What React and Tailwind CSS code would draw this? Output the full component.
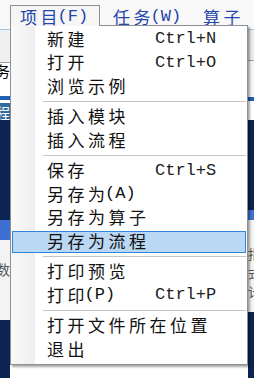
import React from "react";

const CJK_RE = /[\u3000-\u9fff\uff00-\uffef]+|[^\u3000-\u9fff\uff00-\uffef]+/g;
const isCJK = (s) => /[\u3000-\u9fff\uff00-\uffef]/.test(s);

function Label({ text }) {
  const runs = text.match(CJK_RE) || [];
  return (
    <span className="whitespace-nowrap inline-flex items-center">
      {runs.map((r, i) => {
        if (!isCJK(r)) {
          return (
            <span key={i} className="font-['Liberation_Mono',monospace]">
              {r}
            </span>
          );
        }
        const chars = Array.from(r);
        const followed = i < runs.length - 1;
        return chars.map((c, j) => (
          <span
            key={i + "-" + j}
            className={
              "inline-block font-['Noto_Sans_CJK_SC',sans-serif] " +
              (followed && j === chars.length - 1 ? "w-[17px]" : "w-[20.5px]")
            }
          >
            {c}
          </span>
        ));
      })}
    </span>
  );
}

const items = [
  { l: "新建", s: "Ctrl+N" },
  { l: "打开", s: "Ctrl+O" },
  { l: "浏览示例" },
  "sep",
  { l: "插入模块" },
  { l: "插入流程" },
  "sep",
  { l: "保存", s: "Ctrl+S" },
  { l: "另存为(A)" },
  { l: "另存为算子" },
  { l: "另存为流程", hl: true },
  "sep",
  { l: "打印预览" },
  { l: "打印(P)", s: "Ctrl+P" },
  "sep",
  { l: "打开文件所在位置" },
  { l: "退出" },
];

function Dropdown() {
  return (
    <div className="absolute left-[10px] top-[25px] w-[238px] h-[340px] border border-[#8f8f8f] bg-[linear-gradient(to_right,#f9f9f9_0px,#eeeeee_24px,#ffffff_24px)] shadow-[2px_2px_2px_rgba(0,0,0,0.35)] pt-px">
      {items.map((it, i) =>
        it === "sep" ? (
          <div key={i} className="h-[7px] flex items-center pl-[32px] pr-[1px]">
            <div className="h-px w-full bg-[#c4c4c4]" />
          </div>
        ) : (
          <div
            key={i}
            className="relative h-[23.5px] grid grid-cols-[108px_1fr] items-center pl-[36px] text-[17px] leading-none text-[#111]"
          >
            {it.hl && (
              <div className="absolute left-px right-px top-[2px] bottom-0 border border-[#2f86d8] bg-[#bad8f3]" />
            )}
            <span className="relative">
              <Label text={it.l} />
            </span>
            <span className="relative font-['Liberation_Mono',monospace] text-[#222]">
              {it.s || ""}
            </span>
          </div>
        )
      )}
    </div>
  );
}

function Menubar() {
  return (
    <div className="h-[29px] bg-[#f8f8f8] flex items-start text-[17px] leading-none text-[#2445ad] border-b border-[#9cc4e4] box-content">
      <div className="relative z-10 ml-[10px] mt-[5px] h-[21px] w-[90px] border border-b-0 border-[#8f8f8f] bg-[#f6f6f6] flex items-start pt-[2px] pl-[9px]">
        <Label text="项目(F)" />
      </div>
      <div className="mt-[5px] h-[20px] w-[90px] flex items-start pt-[3px] pl-[13px]">
        <Label text="任务(W)" />
      </div>
      <div className="mt-[5px] h-[20px] flex items-start pt-[3px] pl-[13px]">
        <Label text="算子" />
      </div>
    </div>
  );
}

export default function App() {
  return (
    <div className="relative w-[254px] h-[378px] overflow-hidden bg-white">
      <Menubar />
      <div className="grid grid-cols-[10px_238px_6px] h-[348px]">
        {/* left strip */}
        <div className="flex flex-col overflow-hidden">
          <div className="h-[32px] bg-[#f0f0f0]" />
          <div className="h-px bg-[#a0a0a0]" />
          <div className="h-[33px] bg-white flex justify-end items-start overflow-hidden">
            <span className="font-['Noto_Sans_CJK_SC',sans-serif] text-[15px] leading-[15px] text-black whitespace-nowrap">任务</span>
          </div>
          <div className="h-[4px] bg-[#1f5fb4]" />
          <div className="h-[3px] bg-white" />
          <div className="h-[17px] bg-[#2e6b9e] flex justify-end items-center overflow-hidden">
            <span className="font-['Noto_Sans_CJK_SC',sans-serif] text-[14px] leading-none text-white whitespace-nowrap">流程</span>
          </div>
          <div className="h-[100px] bg-[#0b2452]" />
          <div className="h-[20px] bg-[#3d6fd2]" />
          <div className="h-[80px] bg-[#f3f3f3] flex justify-end items-start pt-[22px] overflow-hidden">
            <span className="font-['Noto_Sans_CJK_SC',sans-serif] text-[14px] leading-none text-[#555] whitespace-nowrap">参数</span>
          </div>
          <div className="flex-1 bg-[#0b2452]" />
        </div>
        {/* middle, covered */}
        <div className="bg-white" />
        {/* right strip */}
        <div className="flex flex-col overflow-hidden">
          <div className="h-[30px] bg-[#ebebeb]" />
          <div className="h-px bg-[#a0a0a0]" />
          <div className="h-[36px] bg-[#f4f4f4]" />
          <div className="h-[4px] bg-[#1f5fb4]" />
          <div className="h-[19px] bg-white" />
          <div className="h-[90px] bg-[#0b2452]" />
          <div className="h-[10px] bg-[#4070d0]" />
          <div className="h-[92px] bg-[#f3f3f3] flex flex-col items-start pt-[24px] overflow-hidden font-['Noto_Sans_CJK_SC',sans-serif] text-[13px] leading-[19px] text-[#555]">
            <span>指</span>
            <span>式</span>
            <span>计</span>
          </div>
          <div className="flex-1 bg-[#0b2452]" />
        </div>
      </div>
      <Dropdown />
    </div>
  );
}
